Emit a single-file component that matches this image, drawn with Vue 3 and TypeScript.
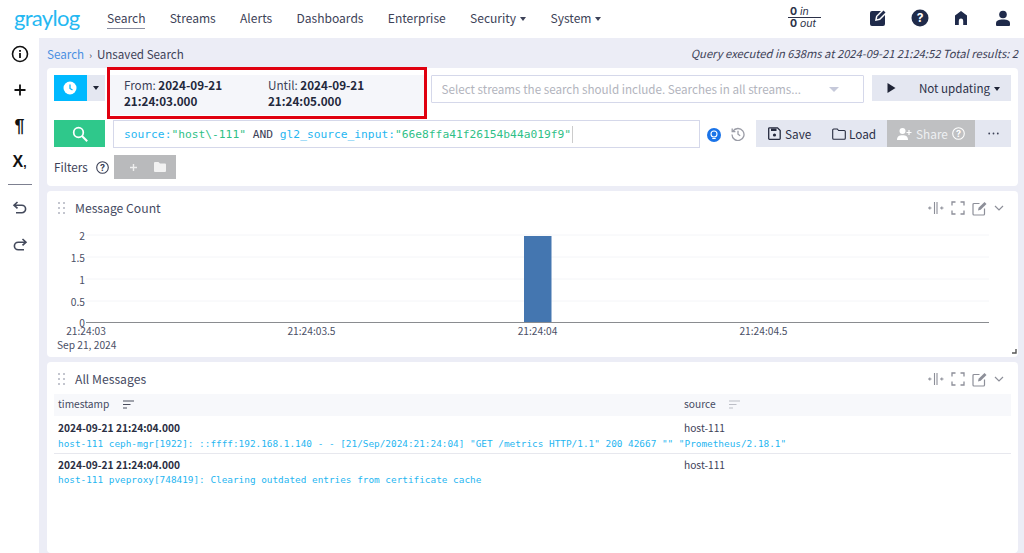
<script setup lang="ts">
const navItems: { label: string; caret?: boolean; active?: boolean }[] = [
  { label: 'Search', active: true },
  { label: 'Streams' },
  { label: 'Alerts' },
  { label: 'Dashboards' },
  { label: 'Enterprise' },
  { label: 'Security', caret: true },
  { label: 'System', caret: true },
]
const yTicks = [
  { label: '2', y: 235 },
  { label: '1.5', y: 257 },
  { label: '1', y: 279 },
  { label: '0.5', y: 301 },
]
const xTicks = [
  { label: '21:24:03', x: 86 },
  { label: '21:24:03.5', x: 311.5 },
  { label: '21:24:04', x: 537.5 },
  { label: '21:24:04.5', x: 763.5 },
]
const rows = [
  {
    time: '2024-09-21 21:24:04.000',
    source: 'host-111',
    message: 'host-111 ceph-mgr[1922]: ::ffff:192.168.1.140 - - [21/Sep/2024:21:24:04] "GET /metrics HTTP/1.1" 200 42667 "" "Prometheus/2.18.1"',
  },
  {
    time: '2024-09-21 21:24:04.000',
    source: 'host-111',
    message: 'host-111 pveproxy[748419]: Clearing outdated entries from certificate cache',
  },
]
</script>

<template>
  <div class="app">
    <header class="nav">
      <div class="logo">graylog</div>
      <nav class="nav-items">
        <span v-for="item in navItems" :key="item.label" class="nav-item" :class="{ active: item.active }">
          {{ item.label }}<i v-if="item.caret" class="caret"></i>
        </span>
      </nav>
      <div class="throughput">
        <div class="t-row"><b>0</b> <em>in</em></div>
        <div class="t-row t-low"><b>0</b> <em>out</em></div>
      </div>
      <div class="nav-icons">
        <svg width="18" height="18" viewBox="0 0 18 18"><path fill="#1f2a4a" d="M3 2h9l-5 5-1 5 5-1 5-5v9a2 2 0 0 1-2 2H3a2 2 0 0 1-2-2V4a2 2 0 0 1 2-2z"/><path fill="#1f2a4a" d="M8.500 7.500 14.500 1.500l2 2-6 6-2.700.7z"/></svg>
        <svg width="18" height="18" viewBox="0 0 18 18"><circle cx="9" cy="9" r="8.500" fill="#1f2a4a"/><text x="9" y="13.200" text-anchor="middle" class="help-q">?</text></svg>
        <svg width="16" height="16" viewBox="0 0 16 16"><path fill="#1f2a4a" d="M8 1 14 5.500V15h-3.800v-4.200a2.200 2.200 0 0 0-4.400 0V15H2V5.500z"/></svg>
        <svg width="16" height="16" viewBox="0 0 16 16"><circle cx="8" cy="4.500" r="3.800" fill="#1f2a4a"/><path fill="#1f2a4a" d="M1 13.500C1 10.500 3.500 9.500 8 9.500s7 1 7 4V15a1 1 0 0 1-1 1H2a1 1 0 0 1-1-1z"/></svg>
      </div>
    </header>

    <div class="body">
      <aside class="side">
        <svg class="s-icon" width="18" height="18" viewBox="0 0 18 18"><circle cx="9" cy="9" r="7.500" fill="none" stroke="#111" stroke-width="1.600"/><rect x="8.100" y="8" width="1.800" height="5" fill="#111"/><rect x="8.100" y="5" width="1.800" height="1.800" fill="#111"/></svg>
        <svg class="s-icon" width="18" height="18" viewBox="0 0 18 18"><path d="M9 3.500v11M3.500 9h11" stroke="#111" stroke-width="1.800" fill="none"/></svg>
        <span class="s-icon s-text pil">¶</span>
        <span class="s-icon s-text xs">X<small>,</small></span>
        <hr class="s-rule" />
        <svg class="s-icon undo" width="18" height="18" viewBox="0 0 18 18"><path d="M6.500 3 3 6.200l3.500 3.200M3.500 6.200h7.300a3.800 3.800 0 0 1 0 7.600H5" fill="none" stroke="#444a5c" stroke-width="1.600"/></svg>
        <svg class="s-icon" width="18" height="18" viewBox="0 0 18 18"><path d="M11.500 4 15 7.200l-3.500 3.200M14.500 7.200H7.200a3.800 3.800 0 0 0 0 7.600H13" fill="none" stroke="#444a5c" stroke-width="1.600"/></svg>
      </aside>

      <main class="main">
        <div class="crumbs">
          <div><a>Search</a><span class="sep">›</span><span>Unsaved Search</span></div>
          <em>Query executed in 638ms at 2024-09-21 21:24:52 Total results: 2</em>
        </div>

        <section class="panel search-panel">
          <div class="row row-one">
            <button class="time-btn">
              <svg width="14" height="14" viewBox="0 0 14 14"><circle cx="7" cy="7" r="6.500" fill="#fff"/><path d="M7 3.500V7.500l2.500 1.500" stroke="#00b9ff" stroke-width="1.300" fill="none"/></svg>
            </button>
            <button class="time-caret"><i class="caret dark"></i></button>
            <div class="range">
              <div class="range-col"><span>From: <b>2024-09-21</b></span><b>21:24:03.000</b></div>
              <div class="range-col"><span>Until: <b>2024-09-21</b></span><b>21:24:05.000</b></div>
              <div class="highlight"></div>
            </div>
            <div class="streams">
              <span>Select streams the search should include. Searches in all streams...</span>
              <i class="tri"></i>
            </div>
            <button class="refresh">
              <svg width="9" height="10" viewBox="0 0 9 10"><path d="M.5 0 8.500 5 .5 10z" fill="#1f2436"/></svg>
              <span>Not updating<i class="caret dark gap"></i></span>
            </button>
          </div>

          <div class="row row-two">
            <button class="go">
              <svg width="18" height="18" viewBox="0 0 18 18"><circle cx="7.500" cy="7.500" r="4.800" fill="none" stroke="#fff" stroke-width="1.700"/><path d="m11 11 5.200 5.200" stroke="#fff" stroke-width="2"/></svg>
            </button>
            <div class="query">
              <span class="k">source:</span><span class="v">"host\-111"</span><span class="op"> AND </span><span class="k">gl2_source_input:</span><span class="v">"66e8ffa41f26154b44a019f9"</span><i class="cursor"></i>
            </div>
            <svg class="bulb" width="14" height="14" viewBox="0 0 14 14"><circle cx="7" cy="7" r="7" fill="#1a73e8"/><circle cx="7" cy="6" r="3" fill="none" stroke="#fff" stroke-width="1.100"/><path d="M5.300 10.500h3.400" stroke="#fff" stroke-width="1.100"/></svg>
            <svg class="hist" width="14" height="14" viewBox="0 0 14 14"><path d="M2 4.200A6 6 0 1 1 1 7.500" fill="none" stroke="#9a9ca6" stroke-width="1.300"/><path d="M1.200 1.500v3.200h3.200" fill="none" stroke="#9a9ca6" stroke-width="1.300"/><path d="M7 3.800V7.200l2.200 1.500" fill="none" stroke="#9a9ca6" stroke-width="1.300"/></svg>
            <div class="actions">
              <button class="act save">
                <svg width="13" height="13" viewBox="0 0 13 13"><path d="M1.500.8h8l2.700 2.700v8a.8.800 0 0 1-.8.800H1.500a.8.800 0 0 1-.8-.8V1.600a.8.800 0 0 1 .8-.8z" fill="none" stroke="#252a3e" stroke-width="1.300"/><rect x="3" y="1.500" width="5.500" height="2.500" fill="#252a3e"/><circle cx="6.500" cy="8" r="1.600" fill="#252a3e"/></svg>
                Save
              </button>
              <button class="act load">
                <svg width="14" height="12" viewBox="0 0 14 12"><path d="M1.700 1h3.600l1.300 1.500h5.700a1 1 0 0 1 1 1v6.800a1 1 0 0 1-1 1H1.700a1 1 0 0 1-1-1V2a1 1 0 0 1 1-1z" fill="none" stroke="#252a3e" stroke-width="1.100"/></svg>
                Load
              </button>
              <button class="act share">
                <svg width="15" height="12" viewBox="0 0 15 12"><circle cx="5.500" cy="3" r="3" fill="#fff"/><path d="M0 12c0-3.500 2-4.800 5.500-4.800S11 8.500 11 12z" fill="#fff"/><path d="M12 2v5M9.500 4.500h5" stroke="#fff" stroke-width="1.200"/></svg>
                Share
                <svg width="13" height="13" viewBox="0 0 13 13"><circle cx="6.500" cy="6.500" r="5.800" fill="none" stroke="#fff" stroke-width="1.100"/><text x="6.500" y="9.500" text-anchor="middle" class="q-white">?</text></svg>
              </button>
              <button class="act more" aria-label="More">
                <svg width="11" height="3" viewBox="0 0 11 3"><circle cx="1.200" cy="1.500" r=".9" fill="#3d4258"/><circle cx="5.500" cy="1.500" r=".9" fill="#3d4258"/><circle cx="9.800" cy="1.500" r=".9" fill="#3d4258"/></svg>
              </button>
            </div>
          </div>

          <div class="row row-three">
            <span class="f-label">Filters</span>
            <svg class="f-help" width="13" height="13" viewBox="0 0 13 13"><circle cx="6.500" cy="6.500" r="5.800" fill="none" stroke="#3a3f55" stroke-width="1.100"/><text x="6.500" y="9.500" text-anchor="middle" class="q-dark">?</text></svg>
            <div class="f-btn">
              <svg width="9" height="9" viewBox="0 0 9 9"><path d="M4.500 1v7M1 4.500h7" stroke="#eee" stroke-width="1.400"/></svg>
              <svg width="12" height="10" viewBox="0 0 12 10"><path d="M1 0h3.500L6 1.500h5a1 1 0 0 1 1 1V9a1 1 0 0 1-1 1H1a1 1 0 0 1-1-1V1a1 1 0 0 1 1-1z" fill="#f2f2f2"/></svg>
            </div>
          </div>
        </section>

        <section class="panel chart-panel">
          <div class="p-head">
            <svg class="grip" width="8" height="12" viewBox="0 0 8 12"><g fill="#c4c6cf"><rect width="2" height="2"/><rect x="5" width="2" height="2"/><rect y="5" width="2" height="2"/><rect x="5" y="5" width="2" height="2"/><rect y="10" width="2" height="2"/><rect x="5" y="10" width="2" height="2"/></g></svg>
            <span class="p-title">Message Count</span>
            <div class="p-tools">
              <svg width="16" height="12" viewBox="0 0 16 12"><g fill="none" stroke="#8d8f99" stroke-width="1.100"><path d="M6.500 0v12M9 0v12M0 6h3.500M12 6h3.500M1.800 4.500v3M13.800 4.500v3"/></g></svg>
              <svg width="14" height="14" viewBox="0 0 14 14"><path d="M1 4.500V1h3.500M9.500 1H13v3.500M13 9.500V13H9.500M4.500 13H1V9.500" fill="none" stroke="#8d8f99" stroke-width="1.300"/></svg>
              <svg width="15" height="15" viewBox="0 0 15 15"><path d="M7.500 2.500H2a1 1 0 0 0-1 1V13a1 1 0 0 0 1 1h9.500a1 1 0 0 0 1-1V7.500" fill="none" stroke="#8d8f99" stroke-width="1.200"/><path d="m6 9.500.6-2.700L12.500 1l2 2-5.800 5.800z" fill="#8d8f99"/></svg>
              <svg width="10" height="6" viewBox="0 0 10 6"><path d="m1 1 4 4 4-4" fill="none" stroke="#8d8f99" stroke-width="1.200"/></svg>
            </div>
          </div>
          <svg class="chart" width="971" height="146" viewBox="47 211 971 146">
            <g v-for="t in yTicks" :key="t.label">
              <line x1="86" x2="989" :y1="t.y" :y2="t.y" stroke="#f4f5f8" />
              <text x="85" :y="t.y + 5" text-anchor="end" class="tick">{{ t.label }}</text>
            </g>
            <text x="85" y="327" text-anchor="end" class="tick">0</text>
            <rect x="524" y="236" width="27.500" height="87" fill="#4476b0" />
            <line x1="86" x2="989" y1="322.500" y2="322.500" stroke="#8a8c90" />
            <text v-for="t in xTicks" :key="t.label" :x="t.x" y="335" text-anchor="middle" class="tick">{{ t.label }}</text>
            <text x="57" y="349" class="tick">Sep 21, 2024</text>
            <path d="M1016 349v4h-4" fill="none" stroke="#555" stroke-width="1.400" />
          </svg>
        </section>

        <section class="panel table-panel">
          <div class="p-head">
            <svg class="grip" width="8" height="12" viewBox="0 0 8 12"><g fill="#c4c6cf"><rect width="2" height="2"/><rect x="5" width="2" height="2"/><rect y="5" width="2" height="2"/><rect x="5" y="5" width="2" height="2"/><rect y="10" width="2" height="2"/><rect x="5" y="10" width="2" height="2"/></g></svg>
            <span class="p-title">All Messages</span>
            <div class="p-tools">
              <svg width="16" height="12" viewBox="0 0 16 12"><g fill="none" stroke="#8d8f99" stroke-width="1.100"><path d="M6.500 0v12M9 0v12M0 6h3.500M12 6h3.500M1.800 4.500v3M13.800 4.500v3"/></g></svg>
              <svg width="14" height="14" viewBox="0 0 14 14"><path d="M1 4.500V1h3.500M9.500 1H13v3.500M13 9.500V13H9.500M4.500 13H1V9.500" fill="none" stroke="#8d8f99" stroke-width="1.300"/></svg>
              <svg width="15" height="15" viewBox="0 0 15 15"><path d="M7.500 2.500H2a1 1 0 0 0-1 1V13a1 1 0 0 0 1 1h9.500a1 1 0 0 0 1-1V7.500" fill="none" stroke="#8d8f99" stroke-width="1.200"/><path d="m6 9.500.6-2.700L12.500 1l2 2-5.800 5.800z" fill="#8d8f99"/></svg>
              <svg width="10" height="6" viewBox="0 0 10 6"><path d="m1 1 4 4 4-4" fill="none" stroke="#8d8f99" stroke-width="1.200"/></svg>
            </div>
          </div>
          <div class="table">
            <div class="t-head">
              <div class="c-time">timestamp
                <svg class="sort-main" width="11" height="9" viewBox="0 0 11 9"><path d="M0 1h11M0 4.500h7.500M0 8h4" stroke="#4a4e5e" stroke-width="1.200"/></svg>
              </div>
              <div class="c-src">source
                <svg class="sort-src" width="11" height="9" viewBox="0 0 11 9"><path d="M0 1h11M0 4.500h7.500M0 8h4" stroke="#bcbec6" stroke-width="1.200"/></svg>
              </div>
            </div>
            <div v-for="(r, i) in rows" :key="i" class="t-row-item">
              <div class="t-cells">
                <b class="c-time">{{ r.time }}</b>
                <span class="c-src src-val">{{ r.source }}</span>
              </div>
              <div class="msg">{{ r.message }}</div>
            </div>
          </div>
        </section>
      </main>
    </div>
  </div>
</template>

<style>
html, body { margin: 0; padding: 0; background: #fff; }
</style>

<style scoped>
.app {
  width: 1024px;
  height: 553px;
  overflow: hidden;
  display: flex;
  flex-direction: column;
  font-family: "Noto Sans CJK SC", "Noto Sans", sans-serif;
  color: #3d4258;
  background: #fff;
}
button { font-family: inherit; border: 0; padding: 0; margin: 0; cursor: pointer; }

.nav { height: 38px; flex: none; display: flex; align-items: center; position: relative; }
.logo {
  width: 107px; padding-left: 14px; box-sizing: border-box;
  font-family: Lato, sans-serif; font-size: 22px; line-height: 30px; color: #25b8f2; letter-spacing: -.7px;
  margin-top: -3px;
}
.nav-items { display: flex; gap: 24.300px; height: 38px; }
.nav-item { font-size: 12.050px; line-height: 36px; height: 28px; white-space: nowrap; color: #3d4258; }
.nav-item.active { border-bottom: 1px solid #8a8ea0; }
.caret {
  display: inline-block; width: 0; height: 0; margin-left: 4px; vertical-align: 2px;
  border-left: 3.500px solid transparent; border-right: 3.500px solid transparent; border-top: 4px solid #3d4258;
}
.caret.dark { border-top-color: #1f2436; margin: 0; }
.caret.gap { margin-left: 4px; }
.throughput {
  position: absolute; left: 788px; top: 6px; width: 33px;
  font-family: Inter, sans-serif; font-size: 10.500px; line-height: 11px; color: #2c3148; white-space: nowrap;
}
.throughput b { font-weight: 700; }
.throughput em { font-weight: 400; }
.t-row { height: 11px; padding-left: 2px; }
.t-low { border-top: 1px solid #2c3148; line-height: 12px; }
.nav-icons { position: absolute; left: 869px; top: 9px; display: flex; align-items: center; gap: 24px; height: 18px; }
.nav-icons svg:nth-child(4) { margin-left: 2px; }
.help-q { font: 700 12px Inter, sans-serif; fill: #fff; }

.body { flex: 1; display: flex; min-height: 0; }
.side { width: 39px; flex: none; display: flex; flex-direction: column; align-items: center; padding-top: 7px; box-sizing: border-box; }
.s-icon { height: 18px; margin-bottom: 18px; display: block; flex: none; }
.s-text { font-family: "Liberation Sans", sans-serif; font-weight: 700; color: #111; line-height: 18px; text-align: center; }
.pil { font-size: 18px; }
.xs { font-size: 16px; margin-bottom: 13px; }
.xs small { font-size: 12px; }
.s-rule { width: 24px; border: 0; border-top: 1px solid #7d8090; margin: 0 0 14px; }

.main { flex: 1; min-width: 0; background: #ecedf6; padding: 0 6px 0 8px; display: flex; flex-direction: column; }
.crumbs {
  height: 30px; flex: none; display: flex; align-items: center; justify-content: space-between;
  font-size: 11.650px; line-height: 18px;
}
.crumbs > div { margin-top: 4px; }
.crumbs a { color: #4a90e2; }
.crumbs .sep { margin: 0 5px; font-size: 9px; }
.crumbs em { font-size: 11.200px; color: #3d4258; }

.panel { background: #fff; border-radius: 4px; flex: none; }
.search-panel { height: 118px; margin-bottom: 5px; padding: 7px 7px 0; box-sizing: border-box; position: relative; }
.row { display: flex; }
.row-one { height: 45px; align-items: flex-start; }
.time-btn { width: 33px; height: 26px; background: #00b9ff; display: flex; align-items: center; justify-content: center; }
.time-caret { width: 18px; height: 26px; background: #e4e7f1; display: flex; align-items: center; justify-content: center; }
.range {
  width: 314px; height: 40px; margin-left: 5px; background: #f5f6fa; display: flex; position: relative;
  padding: 2px 0 0 14px; box-sizing: border-box; font-size: 11.700px; line-height: 16px; color: #3d4258;
}
.range b { font-weight: 700; color: #23283c; }
.range-col { width: 144px; display: flex; flex-direction: column; }
.highlight { position: absolute; left: -3px; top: -8px; width: 320px; height: 52px; border: 3px solid #e0000f; box-sizing: border-box; }
.streams {
  width: 434px; height: 28px; margin-left: 7px; border: 1px solid #d5d8ea; box-sizing: border-box; border-radius: 1px;
  display: flex; align-items: center; justify-content: space-between; padding: 0 24px 0 10px;
  font-size: 11.650px; color: #b2b4bd; white-space: nowrap;
}
.streams span { margin-top: -2px; }
.tri { width: 0; height: 0; border-left: 5px solid transparent; border-right: 5px solid transparent; border-top: 5px solid #c6c9da; }
.refresh {
  width: 139px; height: 26px; margin-left: 8px; background: #e4e7f1; display: flex; align-items: center; justify-content: space-between;
  padding: 0 11px 0 15px; box-sizing: border-box; font-size: 11.600px; color: #2c3148;
}
.row-two { height: 35px; align-items: flex-start; }
.go { width: 51px; height: 27px; background: #2fc88b; display: flex; align-items: center; justify-content: center; }
.query {
  width: 587px; height: 28px; margin-left: 8px; border: 1px solid #d5d8ea; box-sizing: border-box;
  font-family: "DejaVu Sans Mono", monospace; font-size: 11.250px; line-height: 27px; padding-left: 10px; white-space: pre; color: #23283c;
  display: flex;
}
.k { color: #1fb6f1; }
.v { color: #2fbf87; }
.op { color: #3d4258; }
.cursor { width: 1px; height: 17px; background: #ccc; margin: 5px 0 0 1px; }
.bulb { margin: 8px 0 0 7px; flex: none; }
.hist { margin: 7px 0 0 10px; flex: none; }
.actions { margin-left: 11px; display: flex; height: 27px; background: #e4e7f1; width: 255px; }
.act { background: transparent; font-size: 11.800px; color: #2c3148; display: flex; align-items: center; gap: 4px; height: 27px; flex: none; }
.save { width: 65px; padding-left: 12px; box-sizing: border-box; }
.load { width: 66px; padding-left: 11px; box-sizing: border-box; gap: 3px; }
.share { width: 88px; background: #bfc0c2; color: #eef0f3; justify-content: center; gap: 4px; }
.more { width: 36px; justify-content: center; }
.row-three { height: 24px; align-items: center; }
.f-label { font-size: 11.700px; line-height: 18px; width: 41px; }
.f-help { margin-left: 1px; }
.f-btn { margin-left: 5px; width: 62px; height: 24px; background: #b9babc; display: flex; align-items: center; justify-content: space-between; padding: 0 10px 0 15px; box-sizing: border-box; }
.q-white { font: 700 9px Inter, sans-serif; fill: #fff; }
.q-dark { font: 700 9px Inter, sans-serif; fill: #3a3f55; }

.p-head { height: 20px; display: flex; align-items: center; position: relative; }
.grip { margin-left: 11px; }
.p-title { margin-left: 9px; font-size: 12.200px; line-height: 18px; color: #454a62; }
.p-tools { position: absolute; left: 881px; top: 0; height: 20px; display: flex; align-items: center; gap: 7px; }
.chart-panel { height: 166px; margin-bottom: 5px; padding-top: 7px; box-sizing: border-box; position: relative; }
.chart { display: block; position: absolute; left: 0; top: 20px; }
.tick { font: 10.200px "Noto Sans CJK SC", sans-serif; fill: #4a4f66; }
.table-panel { flex: 1; padding-top: 7px; box-sizing: border-box; min-height: 0; }
.table { margin: 5px 7px 0; }
.t-head { height: 22px; background: #f7f8fb; display: flex; align-items: center; font-size: 10.200px; line-height: 20px; color: #454a62; padding-bottom: 2px; box-sizing: border-box; }
.t-head svg { vertical-align: -1px; }
.sort-main { margin-left: 11px; }
.sort-src { margin-left: 11px; }
.c-time { width: 630px; padding-left: 4px; box-sizing: border-box; flex: none; }
.t-row-item { height: 37px; box-sizing: border-box; }
.t-row-item + .t-row-item { border-top: 1px solid #e7e8ee; }
.t-cells { height: 24px; display: flex; align-items: center; font-size: 10.200px; line-height: 14px; margin-bottom: -2px; }
.t-row-item + .t-row-item .t-cells { height: 21px; margin-bottom: -1px; }
.t-cells b { color: #2a2e42; font-weight: 700; }
.src-val { color: #3d4258; }
.msg { font-family: "DejaVu Sans Mono", monospace; font-size: 9.400px; line-height: 12px; color: #1fb6f1; padding-left: 4px; white-space: pre; }
</style>
